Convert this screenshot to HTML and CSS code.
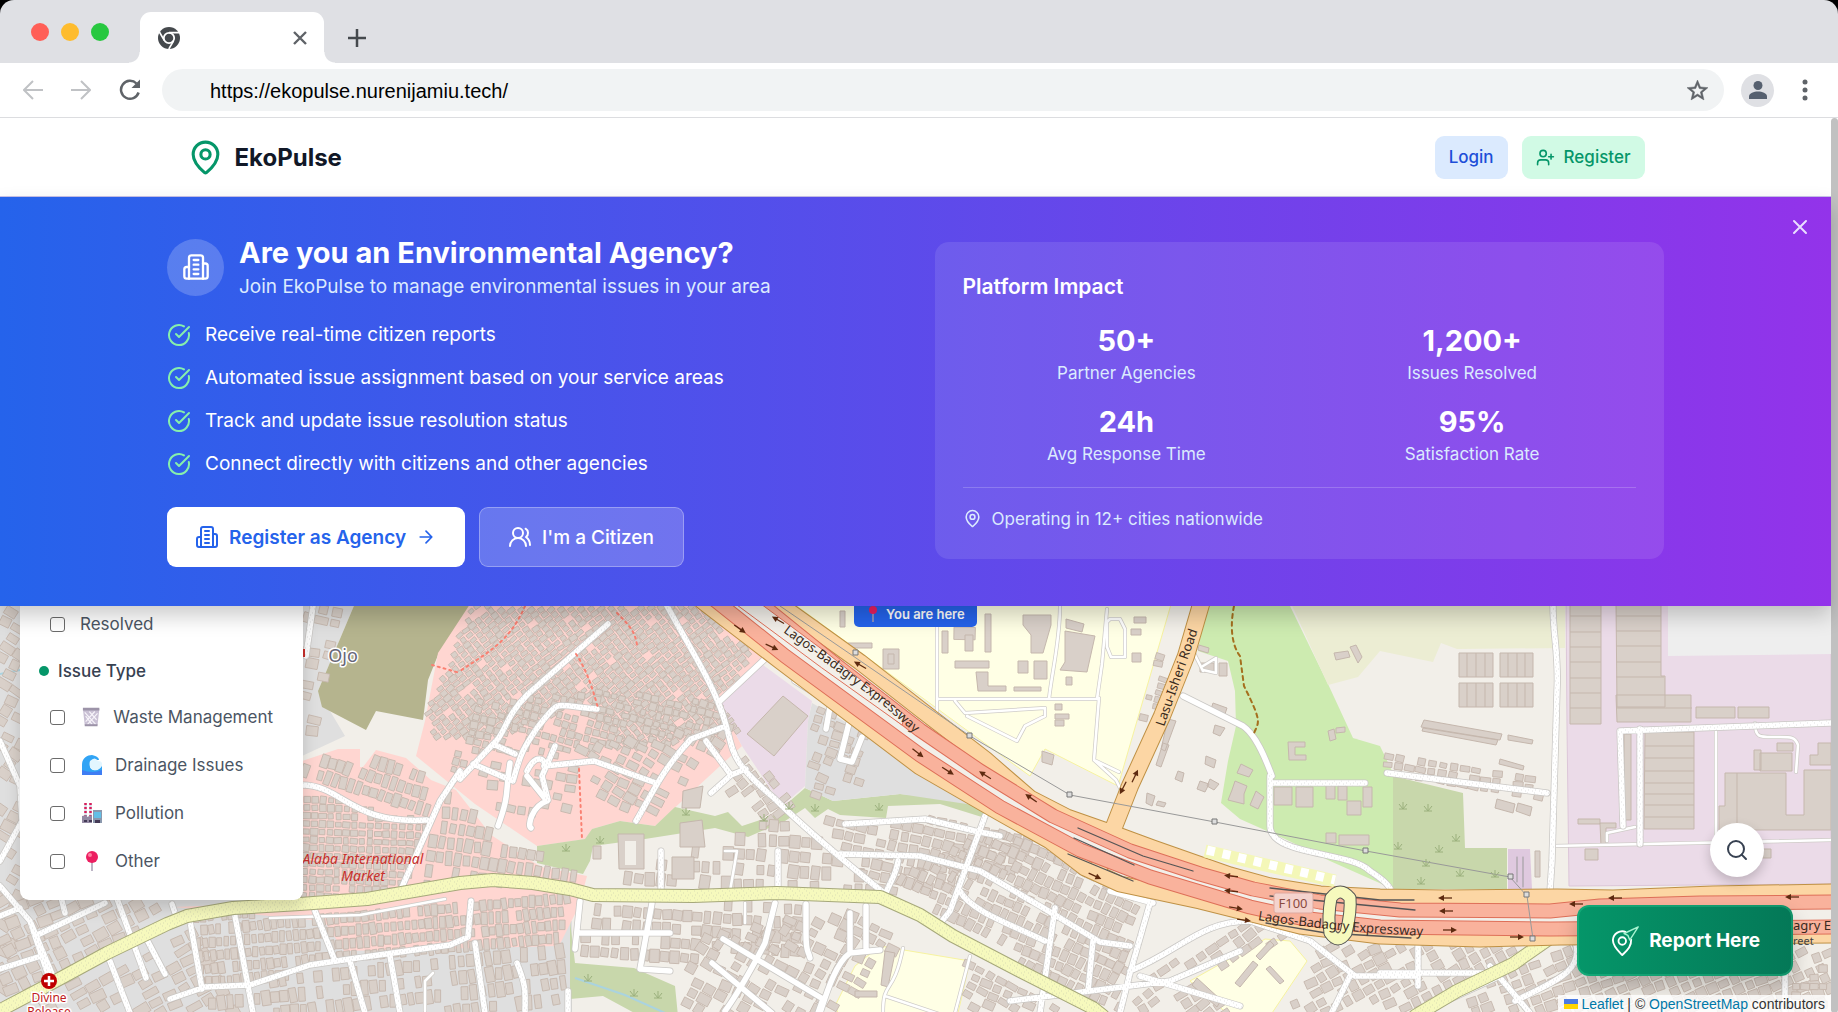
FILE: index.html
```html
<!DOCTYPE html>
<html lang="en">
<head>
<meta charset="utf-8">
<title>EkoPulse</title>
<link rel="stylesheet" href="styles.css">
</head>
<body>
<svg class="defs" width="0" height="0" aria-hidden="true">
  <symbol id="pin" viewBox="0 0 24 24"><path d="M20 10c0 4.993-5.539 10.193-7.399 11.799a1 1 0 0 1-1.202 0C9.539 20.193 4 14.993 4 10a8 8 0 0 1 16 0"/><circle cx="12" cy="10" r="3"/></symbol>
  <symbol id="building" viewBox="0 0 24 24"><path d="M6 22V4a2 2 0 0 1 2-2h8a2 2 0 0 1 2 2v18Z"/><path d="M6 12H4a2 2 0 0 0-2 2v6a2 2 0 0 0 2 2h2"/><path d="M18 9h2a2 2 0 0 1 2 2v9a2 2 0 0 1-2 2h-2"/><path d="M10 6h4M10 10h4M10 14h4M10 18h4"/></symbol>
  <symbol id="check" viewBox="0 0 24 24"><path d="M21.801 10A10 10 0 1 1 17 3.335"/><path d="m9 11 3 3L22 4"/></symbol>
  <symbol id="users" viewBox="0 0 24 24"><path d="M18 21a8 8 0 0 0-16 0"/><circle cx="10" cy="8" r="5"/><path d="M22 20c0-3.37-2-6.5-4-8a5 5 0 0 0-.45-8.3"/></symbol>
  <symbol id="user-plus" viewBox="0 0 24 24"><path d="M16 21v-2a4 4 0 0 0-4-4H6a4 4 0 0 0-4 4v2"/><circle cx="9" cy="7" r="4"/><path d="M19 8v6M22 11h-6"/></symbol>
</svg>

<div class="tabstrip">
  <div class="lights"><span class="light red"></span><span class="light amber"></span><span class="light green"></span></div>
  <div class="tab">
    <svg width="22" height="22" viewBox="0 0 22 22"><circle cx="11" cy="11" r="11" fill="#45494d"/><circle cx="11" cy="11" r="5.2" fill="#45494d" stroke="#fff" stroke-width="1.8"/><path d="M11 5.600H21M6.400 13.600 1.400 5M15.600 13.800 10.800 22" stroke="#fff" stroke-width="1.600"/></svg>
    <button class="plain" aria-label="Close tab"><svg width="14" height="14" viewBox="0 0 14 14" stroke="#5f6368" stroke-width="2.4"><path d="m1 1 12 12M13 1 1 13"/></svg></button>
  </div>
  <button class="plain newtab" aria-label="New tab"><svg width="18" height="18" viewBox="0 0 18 18" stroke="#45494d" stroke-width="2.500"><path d="M9 0v18M0 9h18"/></svg></button>
</div>

<div class="toolbar">
  <button class="plain" aria-label="Back"><svg width="20" height="20" viewBox="0 0 20 20" fill="none" stroke="#c0c2c5" stroke-width="2"><path d="M20 10H2M10 1 1 10l9 9"/></svg></button>
  <button class="plain" aria-label="Forward"><svg width="20" height="20" viewBox="0 0 20 20" fill="none" stroke="#c0c2c5" stroke-width="2"><path d="M0 10h18M10 1l9 9-9 9"/></svg></button>
  <button class="plain" aria-label="Reload"><svg width="22" height="22" viewBox="0 0 22 22" fill="none" stroke="#5f6368" stroke-width="2.500"><path d="M19.600 13.500A9 9 0 1 1 17.500 4.500"/><path d="M21 .5V9h-8.500z" fill="#5f6368" stroke="none"/></svg></button>
  <div class="address">
    <input class="url" type="text" aria-label="Address" value="https://ekopulse.nurenijamiu.tech/">
    <button class="plain" aria-label="Bookmark"><svg width="25" height="25" viewBox="0 0 24 24" fill="#5f6368" stroke="#5f6368" stroke-width=".5"><path d="M22 9.240l-7.190-.62L12 2 9.190 8.630 2 9.240l5.460 4.730L5.820 21 12 17.270 18.180 21l-1.630-7.030L22 9.240zM12 15.400l-3.760 2.270 1-4.280-3.320-2.880 4.380-.38L12 6.100l1.710 4.040 4.380.38-3.320 2.880 1 4.280L12 15.400z"/></svg></button>
  </div>
  <button class="plain avatar" aria-label="Profile"><svg width="18" height="18" viewBox="0 0 18 18" fill="#56606f"><circle cx="9" cy="4.500" r="4.500"/><path d="M0 18v-2.500C0 12 5 10.500 9 10.500s9 1.500 9 5V18z"/></svg></button>
  <button class="plain" aria-label="Menu"><svg width="6" height="22" viewBox="0 0 6 22" fill="#5f6368"><circle cx="3" cy="3" r="2.500"/><circle cx="3" cy="11" r="2.500"/><circle cx="3" cy="19" r="2.500"/></svg></button>
</div>

<div class="viewport">
<div class="page">
  <header class="header">
    <div class="header-inner">
      <a class="brand" href="#"><svg class="icon" width="37" height="37"><use href="#pin"/></svg>EkoPulse</a>
      <nav class="nav">
        <button class="login">Login</button>
        <button class="register"><svg class="icon" width="19" height="19"><use href="#user-plus"/></svg>Register</button>
      </nav>
    </div>
  </header>

  <section class="banner">
    <div class="banner-inner">
      <div class="pitch">
        <div class="intro">
          <span class="badge"><svg class="icon" width="28" height="28"><use href="#building"/></svg></span>
          <div><h1>Are you an Environmental Agency?</h1><p>Join EkoPulse to manage environmental issues in your area</p></div>
        </div>
        <ul class="benefits">
          <li><svg class="icon" width="24" height="24"><use href="#check"/></svg>Receive real-time citizen reports</li>
          <li><svg class="icon" width="24" height="24"><use href="#check"/></svg>Automated issue assignment based on your service areas</li>
          <li><svg class="icon" width="24" height="24"><use href="#check"/></svg>Track and update issue resolution status</li>
          <li><svg class="icon" width="24" height="24"><use href="#check"/></svg>Connect directly with citizens and other agencies</li>
        </ul>
        <div class="actions">
          <button class="cta"><svg class="icon" width="24" height="24"><use href="#building"/></svg>Register as Agency<svg class="icon" width="20" height="20" viewBox="0 0 24 24"><path d="M5 12h14M12 5l7 7-7 7"/></svg></button>
          <button class="cta ghost"><svg class="icon" width="24" height="24"><use href="#users"/></svg>I'm a Citizen</button>
        </div>
      </div>
      <div class="impact">
        <h2>Platform Impact</h2>
        <dl class="stats">
          <div><dd>50+</dd><dt>Partner Agencies</dt></div>
          <div><dd>1,200+</dd><dt>Issues Resolved</dt></div>
          <div><dd>24h</dd><dt>Avg Response Time</dt></div>
          <div><dd>95%</dd><dt>Satisfaction Rate</dt></div>
        </dl>
        <p class="cities"><svg class="icon" width="19" height="19"><use href="#pin"/></svg>Operating in 12+ cities nationwide</p>
      </div>
    </div>
    <button class="plain dismiss" aria-label="Dismiss"><svg class="icon" width="24" height="24" viewBox="0 0 24 24"><path d="M18 6 6 18M6 6l12 12"/></svg></button>
  </section>

  <main class="map">
    <svg class="tiles" viewBox="0 605 1831 407" preserveAspectRatio="xMinYMin slice" role="img" aria-label="Street map of Ojo">
      <defs>
        <pattern id="grit" width="7" height="7" patternUnits="userSpaceOnUse"><path d="M1 1h1M4 3h1M2 5h1M6 6h1" stroke="#999" stroke-width=".7" opacity=".45"/></pattern>
        <path id="minor" d="M0 740 20 785 22 820 0 860M0 885l30 35 25 60 0 0M30 920l20 60M35 935 105 902M65 912l-5-20M0 968l38-12M0 915l20-8M116 895l30 82M145 935l20 38M108 955l22 57M172 903l4 12M190 920l12 68M235 915l18 97M170 998l35-12 45-2 60-20 40-6 100-14 18-8 3-36M315 910l20 50M350 960l15 52 M390 955l10 57M313 605l-7 50M302 784c40 0 50 40 125 35M398 895 440 800 460 770M460 778l38-40c10-15 10-25 30-45l80-70M473 763l40 17c8-30 12-35 24-53 25-30 12-23 60-19M493 743l22 10M527 770c10-20 20-10 17-5l50-5 62 22M555 745l-13 30 6 24M667 605l32 57c50 90 10 80 75 135 20 20 60 55 110 95M636 820c15-25 25-50 55-82l35-13M706 740l25 34 15-6M731 774l-20 18M845 823l80-5 50 12 25 5M840 853l80 2 60 15 60 35 60 36 30 4M661 850v42M778 850v42M898 860c-2 15-8 20-12 32M475 942l10 70M517 962c10 25 8 30 8 50M568 1010v-20M985 815l-35 95-8 10M960 890c10 20 55 35 85 50M1055 907l-15 105M1093 940l-5 50M1150 902l-20 70-10 40M1010 1000l160-20 70-30M1140 975l100 30M1130 970c50-20 70-50 120-50l60 20 45 35 60 0M1350 975l-20 40M1553 605c0 30 6 50 4 85l-5 170-2 30M1387 772l160 20M1272 782h93M1270 775v50c0 30 80 25 100 45 15 10 20 15 22 22M1418 945v40M1380 972h110M1500 975l-80 37M1490 965l40 47M1575 940c10 30-20 40-60 60M1620 730l3 95M1640 728v115M1620 730l210-8M1785 945v67"/>
        <path id="plain" d="M767 656 720 700M795 680l68 42M830 706l-4 22M850 718l-10 40 12 3 10-25M580 900 575 948M580 932h90M652 902l-12 66 30 2M775 902l-10 40c-10 20-30 55-40 68M723 938l100 60-5 14M806 903v30c0 20 2 15 4 24M850 912v40l30-3M866 905v42M850 952c-15 10-25 45-30 60M712 962l60 50M510 762c-5 30 0 30-12 63M527 775l20 25c-15 5-20 25-16 27M1183 695l60 30c15 10 25 40 29 50M1110 890l43 12"/>
        <path id="thin" d="M937 605v105M937 698h160l5-35 5-55M1110 618h10l5 10v28h-14l-4-10v-25zM1060 605c0 35-8 65-11 93M955 700l10 12 80-5v8l-20 10-8 15-50-25M1099 697l-5 62 22 20 5 10M1094 759l25 12M1553 845l280-6M1607 840v-8l28-6M1716 728v115M1755 722c0 15 5 14 20 14s20-1 23 8l-2 27M270 917l90-3 85-16M1193 650l10 20M1203 665l13-8v15l-13-3M730 890l7-40h-12M745 902v20M970 955l-15 57M903 947c-10 50-20 30-20 65M885 995l60 20M425 1010v-30l8-8"/>
        <path id="tertiary" d="M-5 1012 50 983 107 952 167 923 187 915 233 907 300 903 367 898 460 882 493 879 533 882 570 888 593 894 693 895 777 892 880 896 920 914 953 935 1020 970 1093 1007 1103 1015M1553 935 1513 963 1457 990 1415 1015"/>
        <path id="front" d="M775 600 860 661 920 708 985 758 1030 797 1067 816 1107 830 1153 847 1230 874 1270 885 1320 893 1380 896 1445 897 1557 896 1613 897 1713 893 1831 891M702 600 780 660 920 766 1000 812 1050 840 1085 867 1120 883 1200 900 1300 925 1380 935 1480 938 1560 936 1831 934"/>
        <path id="trunk" d="M757 600 840 667 920 729 980 770 1053 815 1130 850 1200 873 1253 888 1320 901 1400 909 1550 910 1600 905 1700 902 1831 901M716 600 785 655 920 754 1000 806 1080 849 1150 876 1250 906 1300 917 1380 926 1550 928 1831 926"/>
        <path id="label-a" d="M783 631 845 676 885 706 960 772"/>
        <path id="label-b" d="M1258 919Q1340 932 1450 936"/>
        <path id="label-c" d="M1164 726 1206 606"/>
        <g id="arrow" fill="#5e2a10" stroke="#5e2a10"><path d="M-7 0h9" stroke-width="1.300"/><path d="M1-3 7 0 1 3z" stroke="none"/></g>
        <path id="tuft" d="M-4-3 0 2 4-3M0-5v7M-4 2h8" fill="none" stroke="#9bb07d"/>
      </defs>
      <rect y="600" width="1831" height="420" fill="#f2efe9"/>
      <g>
        <path d="M0 600h356l-38 90 27 45-43 20v160l270 5v95H0z" fill="#dfdfdf"/>
        <path d="M0 673 20 669" stroke="#aad3df" stroke-width="2"/>
        <path d="M356 600 318 690l4 16 44 23 10-19 47 9 5-40 10-25 22-10 15-44z" fill="#b5b48e"/>
        <path d="M472 600 438 652l-13 68-9 35 59 48 62 42 49-7 6-10 28-8 35 5 65-60 22-20-24-45 47-45-60-55z" fill="#ffd6d1"/>
        <path d="M302 760l36-12h22v18h3l13-17 30 8 25 22 25 10 35 45 50 32 46 9-8 30-20 40-215 5-20-30-150-14 130-5z" fill="#ffd6d1"/>
        <path d="M537 845l48-7 7-10 28-8 35 5 20-19 40 9 13-4 14 14 36-12 12-13 15-13 28 13 67-7 80 7 5 17-45-14-52 2-2 12-46-3-12-6-13 9-10-10-20 13-37 16-33-9-70 11-52 7-3 15-7 13-46-11zM570 920l5 42 59 5 41 18 3 30h-38l-37-20-33 3z" fill="#c8d7ab"/>
        <path d="M575 977l50 17 40 18" fill="none" stroke="#aad3df" stroke-width="2"/>
        <path d="M763 664l49 36-4 20-3 65-23 20-40-60-24-45z" fill="#ebdbe8"/>
        <path d="M812 702l58 33 25 20 85 50-80-12-67 7-28-13 3-67z" fill="#dfdfdf"/>
        <path d="M790 600h382l-54 185-73-37-15 27-43-31zM880 945l90 15-12 52H838l-3-7 20-40zM1190 980l75-42 25 2 17 20-37 55h-40z" fill="#ffffe5" stroke="#f7f3a0"/>
        <path d="M1206 605h84l38 78 25 54 40 8v143l-63-28-45-22-45-20-19-16 7-42 8-35-1-35-7-30-30-10z" fill="#cdebb0"/>
        <path d="M1290 600h275v47l-108 1-16-6-8 19-53-11-22 26-30 8z" fill="#ecedd3"/>
        <path d="M1353 737l27 8 13 27v-30z" fill="#f2efe9"/>
        <path d="M1393 775l70 17 2 55h42v41h-114z" fill="#c8d7ab"/>
        <path d="M1508 848h22l2 40h-24z" fill="#dfc9df"/>
        <path d="M1566 600h265v283l-262 2-2-160z" fill="#ebdbe8" stroke="#dcc6d8"/>
        <path d="M1668 600h163v53l-163 2z" fill="#eee"/>
      </g>
      <g id="blocks" fill="#d9d0c9" stroke="#c5b7ad" stroke-width=".9"></g>
      <g fill="#d9d0c9" stroke="#c5b7ad">
        <path d="M783 695l25 20-34 40-27-22zM1570 600h31v123h-31zM1570 615h31M1570 631h31M1570 646h31M1570 661h31M1570 677h31M1570 692h31M1570 707h31M1616 600h45v75h4v31h-48zM1616 615h45M1616 630h45M1616 645h45M1616 661h45M1616 676h48M1616 694h75v27h-74zM1617 707h75M1696 706h39v11h-39zM1738 706h31v11h-31zM1645 731h49v97h-50zM1645 745h49M1645 757h49M1645 770h49M1645 782h49M1645 793h49M1645 804h49M1645 816h49M1624 733h7v86h-7zM1725 772h61v42h18v-45h27v60h-112v-24h6zM1737 772v56M1760 752h32v18h-32zM1754 749h7v20h-7zM1777 742h16v8h-16zM1818 742h13v22h-21v-10h8zM1585 848h13v11h-13zM1755 848h16v9h-16zM1578 818h22v5h-22zM1600 822h16v5h-10v18h-5zM1459 652h34v24h-34zM1467 652v24M1476 652v24M1485 652v24M1500 652h33v24h-33zM1508 652v24M1517 652v24M1525 652v24M1459 682h34v24h-34zM1467 682v24M1476 682v24M1485 682v24M1500 682h33v24h-33zM1508 682v24M1517 682v24M1525 682v24M1424 719l78 14-2 6-79-13zM1423 727l75 12-2 5-74-14zM1508 734l25 5-1 4-24-4zM1500 758l24 7-1 4-24-6zM1535 850h5v26h-5zM1497 798l18 5-2 9-18-5zM1518 802l14 4-2 9-14-5z"/>
        <path d="M1023 614h28v10l-8 28h-12v-18l-8-10zM1066 618l18 5-2 8-16-4zM1065 630l30 5-8 36-27-2 5-8zM1066 676h6v8h-6zM985 613h6v38h-6zM955 660h34v7h-34zM976 671h12v14h18v5h-28zM1014 686h27v4h-27zM1018 660h10v12h-10zM1034 660h13v18h-13zM942 630h6v22h-6zM965 634h8v16h-8zM1055 703h7v6h-7zM1055 713h14v5h-14zM1055 719h9v6h-9zM1134 616h12v6h-12zM1131 628h10v6h-10zM1132 652h9v9h-9zM1042 750l12 4-2 10-10-3zM848 642h24v5h-24zM840 610h5v16h-5zM883 648h16v20h-16zM888 653h6v10h-6zM1168 718l8 2-11 30-4-2zM1163 742l6 2-8 22-5-2zM1213 702l14 5-2 6-14-5zM1215 724l10 3-5 8-7-3zM1206 755l10 4-2 8-9-4zM1178 770l6 2-2 9-7-3zM1200 780l9 3-4 8-8-3zM1210 778l9 5-5 6-7-4zM1147 792l8 3-3 10-6-3zM1158 800l8 2-2 4-8-2zM1241 763l12 6-4 7-12-4zM1235 780l12 5-3 8 0 10-16-4 4-10zM1256 790l8 6-6 12-8-4zM1288 741h17v5h-10v8h11v5h-17zM1334 652l14-2 2 6-14 3zM1350 646l6-2 6 12-4 6zM1274 786h18v18h-18zM1296 786h17v20h-17zM1326 784h9v14h-9zM1338 785h9v14h-9zM1347 800h14v14h-14zM1363 786h9v20h-9zM1326 832h10v10h-10zM1339 834h30v10h-30zM1328 730l6-2 2 10-6 2zM1336 727l9-1 0 5-9 1zM1219 662h8v13h-8zM1200 662h14v9h-14zM1199 644l10 3-1 5-10-3zM683 790l20-5-3 22-18 0zM680 822l22-3 3 27-25 0zM618 833h26v35h-25zM672 856h22v22h-22zM593 845h8v13h-8zM1197 977l24 22-4 7-25-22zM1270 940l4 4-14 15-4-4zM1253 960l5 4-18 22-5-4zM1270 965l14 15-4 3-14-15zM885 950l10 2-7 34-7-2zM855 990h22v6h-22z"/>
      </g>
      <rect x="625" y="840" width="11" height="24" fill="#f2efe9"/>
      <g stroke-linecap="round" stroke-linejoin="round" fill="none">
        <use href="#thin" stroke="#cfccc8" stroke-width="4"/><use href="#thin" stroke="#fff" stroke-width="2.600"/>
        <use href="#minor" stroke="#c9c7c4" stroke-width="7"/><use href="#plain" stroke="#c9c7c4" stroke-width="7"/>
        <use href="#minor" stroke="#fff" stroke-width="5.500"/><use href="#plain" stroke="#fff" stroke-width="5.500"/>
        <use href="#minor" stroke="url(#grit)" stroke-width="5"/>
        <use href="#tertiary" stroke="#a6a87a" stroke-width="14"/><use href="#tertiary" stroke="#f6f9bd" stroke-width="12"/><use href="#tertiary" stroke="url(#grit)" stroke-width="12"/>
        <path d="M1108 845 1098 868M1110 836 1130 785 1162 715 1186 655 1202 600" stroke="#bf9145" stroke-width="18"/>
        <use href="#front" stroke="#bf9145" stroke-width="17"/><use href="#front" stroke="#fcd6a4" stroke-width="15"/>
        <path d="M1108 845 1098 868M1110 836 1130 785 1162 715 1186 655 1202 600" stroke="#fcd6a4" stroke-width="16"/>
        <path d="M738 605 920 742 1000 792 1080 836 1150 861 1250 895 1380 917 1545 919 1831 915" stroke="#f2efe9" stroke-width="12"/>
        <use href="#trunk" stroke="#de6f58" stroke-width="15"/><use href="#trunk" stroke="#f9b29c" stroke-width="13"/>
        <path d="M732 600h25l70 52 78 62-3 10-80-57z" fill="#f2efe9" stroke="#de6f58"/>
        <path d="M1078 827l65 28 50 15M1074 837l60 27M1068 853l65 27M1270 887l110 12h34M1270 895l145 14M1266 922l60 10 85 5" stroke="#555" stroke-width="1.300"/>
        <path d="M1205 850 1335 880" stroke="#f4f7b8" stroke-width="13" stroke-linecap="butt"/><path d="M1207 849 1335 879" stroke="#fff" stroke-width="9" stroke-dasharray="8 8" stroke-linecap="butt"/>
        <path d="M1331 897Q1340 885 1350 897C1351 908 1349 920 1346 932Q1338 944 1330 932C1328 920 1329 908 1331 897z" stroke="#555" stroke-width="13"/><path d="M1331 897Q1340 885 1350 897C1351 908 1349 920 1346 932Q1338 944 1330 932C1328 920 1329 908 1331 897z" stroke="#f6f9bd" stroke-width="11"/>
        <path d="M780 605 970 735 1070 794 1215 821 1366 850 1510 876 1527 895 1533 938M1517 856v25M1523 856v30" stroke="#999" stroke-width="1"/>
        <path d="M525 605c-15 35-35 45-65 65M617 612c15 15 18 20 20 32M576 653c12 18 18 40 22 54M579 768l3 70M432 664l28 8" stroke="#fa8072" stroke-width="2" stroke-dasharray="2 4"/>
        <path d="M1234 605c-6 30 2 45 6 50l4 30c20 40 14 35 9 50" stroke="#a56f1e" stroke-width="2" stroke-dasharray="4 4"/>
      </g>
      <g fill="#ddd" stroke="#777"><path d="M853 649h5v5h-5zM967 732h5v5h-5zM1067 791h5v5h-5zM1212 818h5v5h-5zM1363 847h5v5h-5zM1508 873h5v5h-5zM1524 891h5v5h-5zM1530 935h5v5h-5z"/></g>
      <g>
        <use href="#arrow" transform="translate(740 628) rotate(35)"/><use href="#arrow" transform="translate(772 646) rotate(25)"/><use href="#arrow" transform="translate(778 619) rotate(210)"/><use href="#arrow" transform="translate(860 664) rotate(210)"/><use href="#arrow" transform="translate(918 752) rotate(38)"/><use href="#arrow" transform="translate(948 770) rotate(33)"/><use href="#arrow" transform="translate(985 774) rotate(212)"/><use href="#arrow" transform="translate(1031 797) rotate(215)"/><use href="#arrow" transform="translate(1095 875) rotate(25)"/><use href="#arrow" transform="translate(1123 787) rotate(117)"/><use href="#arrow" transform="translate(1135 775) rotate(-65)"/><use href="#arrow" transform="translate(1231 875) rotate(186)"/><use href="#arrow" transform="translate(1231 890) rotate(186)"/><use href="#arrow" transform="translate(1236 907) rotate(10)"/><use href="#arrow" transform="translate(1244 919) rotate(8)"/><use href="#arrow" transform="translate(1445 897) rotate(180)"/><use href="#arrow" transform="translate(1446 910) rotate(180)"/><use href="#arrow" transform="translate(1450 929)"/><use href="#arrow" transform="translate(1517 936)"/><use href="#arrow" transform="translate(1576 903) rotate(180)"/><use href="#arrow" transform="translate(1615 897) rotate(180)"/><use href="#arrow" transform="translate(1792 896) rotate(180)"/>
        <use href="#tuft" x="566" y="848"/><use href="#tuft" x="600" y="840"/><use href="#tuft" x="686" y="812"/><use href="#tuft" x="764" y="818"/><use href="#tuft" x="789" y="806"/><use href="#tuft" x="815" y="808"/><use href="#tuft" x="879" y="807"/><use href="#tuft" x="588" y="978"/><use href="#tuft" x="634" y="993"/><use href="#tuft" x="658" y="995"/><use href="#tuft" x="1403" y="806"/><use href="#tuft" x="1428" y="808"/><use href="#tuft" x="1456" y="838"/><use href="#tuft" x="1398" y="846"/><use href="#tuft" x="1439" y="849"/><use href="#tuft" x="1426" y="863"/><use href="#tuft" x="1460" y="873"/><use href="#tuft" x="1421" y="881"/><use href="#tuft" x="1495" y="874"/>
      </g>
      <g class="map-label">
        <text font-size="13" fill="#3a2b20"><textPath href="#label-a">Lagos-Badagry Expressway</textPath></text>
        <text font-size="13" fill="#3a2b20"><textPath href="#label-b">Lagos-Badagry Expressway</textPath></text>
        <text font-size="13" fill="#3a2b20"><textPath href="#label-c">Lasu-Isheri Road</textPath></text>
        <text x="1793" y="929" font-size="13" fill="#3a2b20">agry Ex</text>
        <text x="1793" y="944" font-size="11" fill="#444">reet</text>
        <text x="343" y="661" text-anchor="middle" font-size="18" fill="#667" class="halo">Ojo</text>
        <g font-style="italic" font-size="14" fill="#c9302c" text-anchor="middle"><text x="363" y="863">Alaba International</text><text x="363" y="880">Market</text></g>
        <g font-size="12" fill="#bf2020" text-anchor="middle" class="halo"><text x="49" y="1001">Divine</text><text x="49" y="1015">Release</text></g>
        <rect x="303" y="648" width="2" height="8" fill="#c9302c"/>
        <rect x="1274" y="892" width="39" height="20" rx="2" fill="#f4d3cd" stroke="#dfa89e"/><text x="1293" y="907" font-size="13" fill="#8b4a3e" text-anchor="middle">F100</text>
      </g>
      <circle cx="49" cy="980" r="8" fill="#bf0000"/><path d="M49 975v10M44 980h10" stroke="#fff" stroke-width="2.500"/>
    </svg>

    <form class="filters">
      <label class="option status"><input type="checkbox">Resolved</label>
      <h3>Issue Type</h3>
      <label class="option"><input type="checkbox"><svg width="20" height="20" viewBox="0 0 20 20"><path d="M1 1h18l-2 18H3z" fill="#c9c0d4"/><path d="M3 5l12 13M8 4l8 9M14 4 4 15M17 6 6 18M4 9l7 9" stroke="#f7f4fa" stroke-width="1.300"/><path d="M1 0h18v3H1zM3 18h14v2H3z" fill="#9c93a8"/></svg>Waste Management</label>
      <label class="option"><input type="checkbox"><svg width="20" height="20" viewBox="0 0 20 20"><path d="M0 20V10C0 3 5 0 10 0c5 1 7 3 7 5h-5l-4 4v3c1 4 8 5 12-2v10z" fill="#31a4f5"/><path d="M0 15q10 4 20 0v5H0z" fill="#3f7df3"/><path d="M8 6q5-5 8 0 5 0 4 5-3 5-8 4-6-2-4-9z" fill="#e3f6ff"/></svg>Drainage Issues</label>
      <label class="option"><input type="checkbox"><svg width="20" height="20" viewBox="0 0 20 20"><path d="M3.500 0v13M8.500 0v13" stroke="#d9dbe8" stroke-width="2.500"/><path d="M3.500 0v13M8.500 0v13" stroke="#d81e5b" stroke-width="2.500" stroke-dasharray="2 2"/><path d="M0 13l5-1v2l5-2v8H0z" fill="#9389a3"/><path d="M11 7h9v13h-9z" fill="#8b98ad"/><path d="M12 9h7v6h-7z" fill="#63bfe6"/><path d="M2 17h3v2H2zM7 17h3v2H7zM13 17h5v3h-5z" fill="#443a56"/></svg>Pollution</label>
      <label class="option"><input type="checkbox"><svg width="20" height="20" viewBox="0 0 20 20"><path d="M10 9v11" stroke="#a79db3" stroke-width="1.500"/><circle cx="10" cy="6" r="6" fill="#ec1f61"/><circle cx="8" cy="4" r="2" fill="#ff7fa0"/></svg>Other</label>
    </form>

    <div class="here"><svg width="10" height="16" viewBox="0 0 10 16"><path d="M5 7v9" stroke="#a79db3" stroke-width="1.500"/><circle cx="5" cy="4" r="4" fill="#ec1f61"/></svg>You are here</div>
    <button class="search" aria-label="Search"><svg class="icon" width="24" height="24" viewBox="0 0 24 24"><path d="m21 21-4.340-4.340"/><circle cx="11" cy="11" r="8"/></svg></button>
    <button class="report"><svg width="30" height="34" viewBox="0 0 30 34" fill="none" stroke="#fff" stroke-width="2" stroke-linejoin="round"><path d="M16 7.500A10 10 0 0 0 2 16c0 7 6 12 10 16 5-5 10-9 9.500-17"/><circle cx="12" cy="17" r="4"/><path d="M29 2 14 9l4 2 2 5z" stroke="#a7f3d0" stroke-width="1.500"/></svg>Report Here</button>
    <div class="credit"><svg width="14" height="10" viewBox="0 0 14 10"><path d="M0 0h14v5H0z" fill="#4c7be1"/><path d="M0 5h14v5H0z" fill="#ffd500"/></svg> <a href="#">Leaflet</a> | © <a href="#">OpenStreetMap</a> contributors</div>
  </main>
</div>
<div class="scrollbar"></div>
</div>
<script src="map.js"></script>
</body>
</html>
```
FILE: styles.css
```css
* { box-sizing: border-box; }
body { margin: 0; min-height: 100vh; display: flex; flex-direction: column; font-family: Inter, "Liberation Sans", sans-serif; background: #000; }
h1, h2, h3, p, ul, dl, dd { margin: 0; padding: 0; }
button { font: inherit; border: 0; cursor: pointer; }
a { text-decoration: none; }
.defs { position: absolute; }
.plain { display: flex; padding: 0; background: none; }
.icon { fill: none; stroke: currentColor; stroke-width: 2; stroke-linecap: round; stroke-linejoin: round; flex: none; }

.tabstrip { display: flex; height: 63px; padding: 12px 0 0 31px; background: #dfe0e4; border-radius: 14px 14px 0 0; }
.lights { display: flex; gap: 12px; width: 109px; padding-top: 11px; }
.light { width: 18px; height: 18px; border-radius: 50%; }
.red { background: #ff5f57; }
.amber { background: #febc2e; }
.green { background: #28c840; }
.tab { position: relative; display: flex; align-items: center; justify-content: space-between; width: 184px; padding: 0 17px 0 18px; border-radius: 11px 11px 0 0; background: #fff; }
.tab::before, .tab::after { content: ""; position: absolute; bottom: 0; width: 11px; height: 11px; }
.tab::before { right: 100%; background: radial-gradient(circle at 0 0, transparent 10px, #fff 11px); }
.tab::after { left: 100%; background: radial-gradient(circle at 100% 0, transparent 10px, #fff 11px); }
.newtab { align-self: center; margin-left: 24px; }

.toolbar { display: flex; align-items: center; gap: 28px; height: 55px; padding: 0 30px 0 23px; background: #fff; border-bottom: 1px solid #dcdde0; }
.address { flex: 1; display: flex; align-items: center; height: 42px; margin: 0 -11px 0 -7px; padding: 0 14px 0 48px; border-radius: 21px; background: #f1f3f4; }
.url { flex: 1; border: 0; padding: 2px 0 0; outline: 0; background: none; color: #000; font: 20px "Liberation Sans", sans-serif; }
.avatar { align-items: center; justify-content: center; width: 33px; height: 33px; border-radius: 50%; background: #dfe0e4; }

.viewport { flex: 1; display: flex; background: #fff; }
.page { flex: 1; min-width: 0; display: flex; flex-direction: column; }
.scrollbar { width: 7px; border-radius: 4px; background: #c1c1c1; }

.header { background: #fff; border-bottom: 1px solid #c9c3ea; }
.header-inner { display: flex; align-items: center; justify-content: space-between; max-width: 1498px; height: 78px; margin: 0 auto; padding: 0 20px; }
.brand { display: flex; align-items: center; gap: 11px; color: #111827; font-size: 24px; font-weight: 700; }
.brand .icon { color: #059669; }
.nav { display: flex; gap: 14px; }
.nav button { display: flex; align-items: center; gap: 9px; height: 43px; padding: 0 14px; border-radius: 9px; font-size: 17px; font-weight: 500; }
.nav .login { background: #dbeafe; color: #1d4ed8; }
.nav .register { background: #d1fae5; color: #059669; }

.banner { position: relative; z-index: 1; padding: 36px 19px 39px; background: linear-gradient(90deg, #2563eb, #9333ea); box-shadow: 0 10px 20px rgba(0, 0, 0, .2); color: #fff; }
.banner-inner { display: grid; grid-template-columns: 1fr 1fr; align-items: center; gap: 38px; max-width: 1497px; margin: 0 auto; }
.intro { display: flex; align-items: center; gap: 15px; margin-bottom: 19px; }
.badge { display: flex; align-items: center; justify-content: center; width: 57px; height: 57px; border-radius: 50%; background: rgba(255, 255, 255, .2); }
.intro h1 { font-size: 29px; line-height: 40px; font-weight: 700; }
.intro p { font-size: 19px; line-height: 28px; color: #dbeafe; }
.benefits { display: grid; gap: 14px; list-style: none; }
.benefits li { display: flex; align-items: center; gap: 14px; font-size: 19px; line-height: 29px; }
.benefits .icon { color: #86efac; }
.actions { display: flex; gap: 14px; margin-top: 29px; }
.cta { display: flex; align-items: center; gap: 10px; height: 60px; padding: 0 29px 0 28px; border-radius: 9px; background: #fff; color: #2563eb; font-size: 19px; font-weight: 600; }
.cta.ghost { border: 1px solid rgba(255, 255, 255, .3); background: rgba(255, 255, 255, .2); color: #fff; font-weight: 500; }
.impact { padding: 28px; border-radius: 14px; background: rgba(255, 255, 255, .1); }
.impact h2 { font-size: 21px; line-height: 33px; font-weight: 600; }
.stats { display: grid; grid-template-columns: 1fr 1fr; gap: 17px 18px; margin-top: 19px; padding-bottom: 20px; border-bottom: 1px solid rgba(255, 255, 255, .2); text-align: center; }
.stats div { display: flex; flex-direction: column; }
.stats dd { font-size: 29px; line-height: 38px; font-weight: 700; }
.stats dt { font-size: 17px; line-height: 26px; color: #dbeafe; }
.cities { display: flex; align-items: center; gap: 10px; margin-top: 19px; font-size: 17px; line-height: 24px; color: #dbeafe; }
.dismiss { position: absolute; top: 18px; right: 19px; color: #e9ddff; }

.map { position: relative; flex: 1; min-height: 407px; overflow: hidden; background: #f2efe9; }
.tiles { position: absolute; inset: 0; width: 100%; height: 100%; }
.map-label { font-family: "Noto Sans", sans-serif; }
.halo { paint-order: stroke; stroke: #fff; stroke-width: 3px; }

.filters { position: absolute; top: 0; left: 20px; width: 283px; padding: 4px 30px 15px; border-radius: 0 0 9px 9px; background: #fff; box-shadow: 0 8px 16px rgba(0, 0, 0, .16); color: #4b5563; }
.filters h3 { display: flex; align-items: center; gap: 9px; margin: 21px 0 10px -11px; color: #374151; font-size: 17px; line-height: 24px; font-weight: 500; }
.filters h3::before { content: ""; width: 10px; height: 10px; border-radius: 50%; background: #059669; }
.option { display: flex; align-items: center; gap: 13px; height: 48px; font-size: 17px; white-space: nowrap; }
.option.status { gap: 15px; height: 28px; }
.option input { appearance: none; flex: none; width: 15px; height: 15px; margin: 0; border: 1px solid #6b6b6b; border-radius: 3px; background: #fff; }
.option svg { margin-left: 4px; }

.here { position: absolute; top: -14px; left: 854px; display: flex; align-items: center; gap: 8px; height: 35px; width: 123px; padding: 8px 9px 0 14px; border-radius: 5px; background: #2563eb; color: #fff; font-size: 13px; font-weight: 600; white-space: nowrap; }
.search { position: absolute; right: 67px; bottom: 136px; display: flex; align-items: center; justify-content: center; width: 54px; height: 54px; padding: 0; border-radius: 50%; background: #fff; box-shadow: 0 5px 12px rgba(0, 0, 0, .2); color: #374151; }
.report { position: absolute; right: 38px; bottom: 37px; display: flex; align-items: center; gap: 10px; height: 71px; width: 216px; padding: 0 31px 0 32px; border: 2px solid rgba(52, 211, 153, .3); border-radius: 12px; background: linear-gradient(90deg, #059669, #047857); background-origin: border-box; box-shadow: 0 10px 20px rgba(0, 0, 0, .2); color: #fff; font-size: 19px; font-weight: 700; white-space: nowrap; }
.credit { position: absolute; right: 0; bottom: 0; height: 18px; padding: 0 6px; background: rgba(255, 255, 255, .8); color: #333; font: 14px/18px "Liberation Sans", sans-serif; }
.credit a { color: #0078a8; }
```
FILE: map.js
```js
// Fills each built-up zone of the map with rows of small building footprints.
const NS = "http://www.w3.org/2000/svg";
let seed = 7;
const rand = () => (seed = (seed * 16807) % 2147483647) / 2147483647;

// [polygon, rotation in degrees, cell width, cell height, density]
const zones = [
  ["0,605 22,605 22,900 0,1012", 30, 15, 11, .85],
  ["0,895 180,905 110,945 0,1000", -25, 15, 12, .85],
  ["300,605 354,605 318,690 330,730 302,740", 12, 14, 11, .7],
  ["0,1012 115,965 190,925 250,1012", -28, 16, 11, .75],
  ["190,915 570,895 560,940 200,985", -5, 7, 13, .95],
  ["205,990 460,950 565,940 565,1012 205,1012", -6, 9, 16, .75],
  ["330,755 420,765 430,815 302,785 302,770", 18, 8, 15, .9],
  ["302,790 430,822 405,890 302,900", 2, 8, 8, .95],
  ["445,790 500,840 580,870 575,880 420,885", 8, 9, 15, .9],
  ["472,605 700,605 755,655 718,700 742,730 620,750 590,700 500,735 430,740 425,715", -38, 8, 6, .95],
  ["480,700 600,690 715,700 740,735 655,745 500,755 450,770", 15, 8, 8, .7],
  ["580,745 740,725 650,815 590,800", 28, 13, 10, .75],
  ["470,750 580,755 570,820 500,815", 10, 11, 10, .25],
  ["742,748 800,805 770,830 730,790", -35, 13, 9, .85],
  ["812,700 870,735 860,790 812,795", 20, 12, 9, .7],
  ["700,845 785,815 880,890 590,890", 3, 11, 15, .7],
  ["820,815 990,820 1070,860 880,895", 12, 11, 11, .85],
  ["590,905 800,902 800,955 640,960 580,960", 4, 10, 14, .85],
  ["690,940 860,905 900,940 840,1012 680,1012", 28, 13, 11, .8],
  ["890,880 1000,825 1140,895 1120,1012 1080,1000", 25, 9, 12, .92],
  ["970,955 1080,1012 960,1012", 27, 12, 9, .7],
  ["1140,980 1280,905 1300,930 1190,980 1230,1012 1130,1012", -35, 13, 10, .7],
  ["1320,945 1550,942 1410,1012 1290,1012", -28, 12, 11, .85],
  ["1430,1012 1560,945 1831,945 1831,1012", -22, 12, 11, .85],
  ["1380,748 1545,775 1545,800 1380,770", 9, 11, 8, .8],
  ["1160,655 1195,655 1150,720 1140,720", 15, 9, 7, .5],
  ["835,605 1000,605 960,640 900,620", 4, 22, 13, .5],
  ["1780,990 1831,960 1831,1012", 0, 9, 9, .7]
];

const inside = (pts, x, y) => {
  let hit = false;
  for (let i = 0, j = pts.length - 1; i < pts.length; j = i++) {
    const [xi, yi] = pts[i], [xj, yj] = pts[j];
    if ((yi > y) !== (yj > y) && x < (xj - xi) * (y - yi) / (yj - yi) + xi) hit = !hit;
  }
  return hit;
};

for (const [poly, angle, cw, ch, density] of zones) {
  const pts = poly.split(" ").map(p => p.split(",").map(Number));
  const xs = pts.map(p => p[0]), ys = pts.map(p => p[1]);
  const cx = (Math.min(...xs) + Math.max(...xs)) / 2;
  const cy = (Math.min(...ys) + Math.max(...ys)) / 2;
  const reach = Math.hypot(Math.max(...xs) - cx, Math.max(...ys) - cy);
  let d = "";
  for (let v = -reach; v < reach; v += ch) {
    for (let u = -reach; u < reach; u += cw) {
      const turn = (angle + (rand() - .5) * 12) * Math.PI / 180;
      const base = angle * Math.PI / 180;
      const x = cx + u * Math.cos(base) - v * Math.sin(base);
      const y = cy + u * Math.sin(base) + v * Math.cos(base);
      if (rand() > density || !inside(pts, x, y)) continue;
      const w = cw * (.6 + rand() * .4), h = ch * (.6 + rand() * .36);
      const c = Math.cos(turn), s = Math.sin(turn);
      const corner = (a, b) => (x + a * c - b * s).toFixed(1) + " " + (y + a * s + b * c).toFixed(1);
      d += "M" + corner(-w / 2, -h / 2) + "L" + corner(w / 2, -h / 2) + "L" + corner(w / 2, h / 2) + "L" + corner(-w / 2, h / 2) + "z";
    }
  }
  const path = document.createElementNS(NS, "path");
  path.setAttribute("d", d);
  document.getElementById("blocks").append(path);
}
```
